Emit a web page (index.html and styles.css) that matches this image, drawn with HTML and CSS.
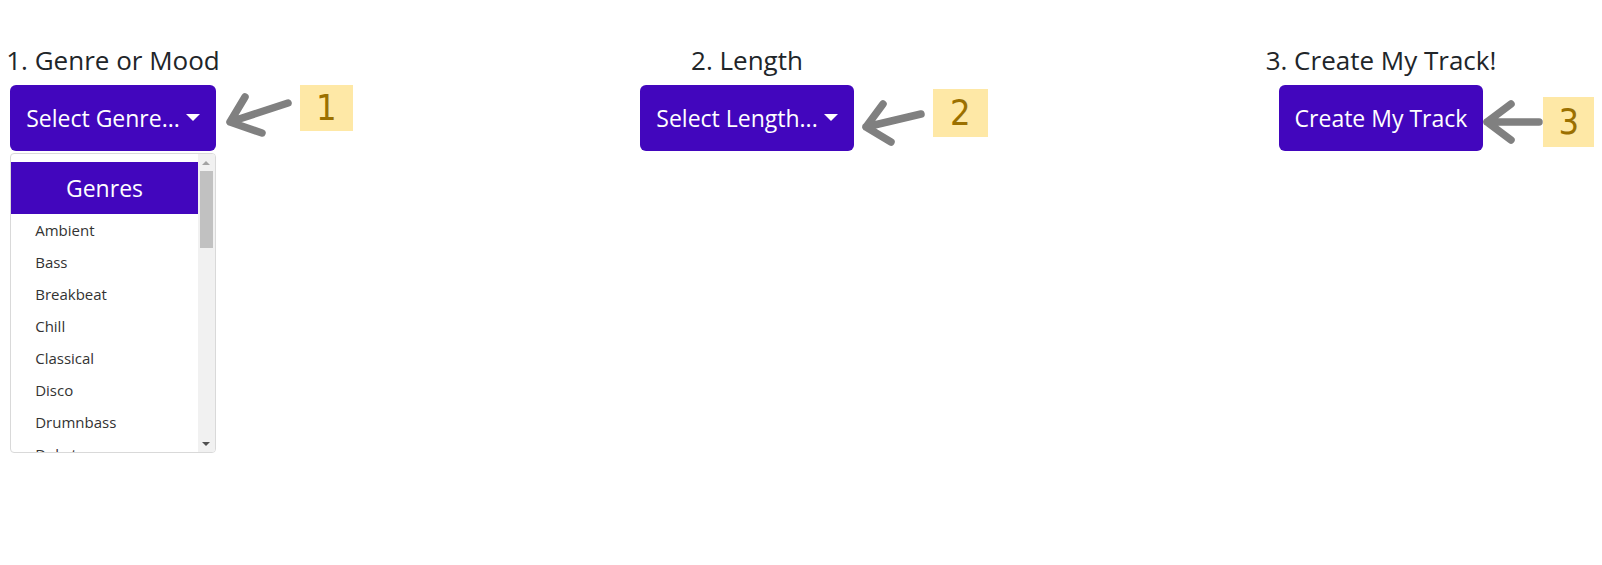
FILE: index.html
```html
<!DOCTYPE html>
<html lang="en">
<head>
<meta charset="utf-8">
<title>Create My Track</title>
<link rel="stylesheet" href="styles.css">
</head>
<body>
<main class="steps">
  <section class="step">
    <h3 class="step-title">1. Genre or Mood</h3>
    <div class="dropdown">
      <div class="btn-wrap">
        <button class="btn btn-toggle" type="button">Select Genre...</button>
        <div class="hint hint-1">
          <svg class="hint-arrow" width="80" height="60" viewBox="0 0 80 60">
            <path d="M72 18 L14 37 M29 12 L14 37 L46 48" />
          </svg>
          <span class="hint-num">1</span>
        </div>
      </div>
      <div class="menu">
        <div class="menu-list">
          <div class="menu-header">Genres</div>
          <div class="menu-item">Ambient</div>
          <div class="menu-item">Bass</div>
          <div class="menu-item">Breakbeat</div>
          <div class="menu-item">Chill</div>
          <div class="menu-item">Classical</div>
          <div class="menu-item">Disco</div>
          <div class="menu-item">Drumnbass</div>
          <div class="menu-item">Dubstep</div>
          <div class="menu-item">Electro</div>
          <div class="menu-item">Funk</div>
          <div class="menu-item">Hiphop</div>
          <div class="menu-item">House</div>
          <div class="menu-item">Indie</div>
          <div class="menu-item">Jazz</div>
          <div class="menu-item">Lofi</div>
          <div class="menu-item">Pop</div>
          <div class="menu-item">Rock</div>
          <div class="menu-item">Synthwave</div>
          <div class="menu-item">Techno</div>
          <div class="menu-item">Trance</div>
          <div class="menu-item">Trap</div>
          <div class="menu-header">Moods</div>
          <div class="menu-item">Calm</div>
          <div class="menu-item">Dark</div>
          <div class="menu-item">Dreamy</div>
          <div class="menu-item">Energetic</div>
          <div class="menu-item">Epic</div>
          <div class="menu-item">Happy</div>
          <div class="menu-item">Romantic</div>
          <div class="menu-item">Sad</div>
          <div class="menu-item">Uplifting</div>
        </div>
        <div class="scrollbar">
          <div class="sb-btn sb-up"></div>
          <div class="sb-track"><div class="sb-thumb"></div></div>
          <div class="sb-btn sb-down"></div>
        </div>
      </div>
    </div>
  </section>

  <section class="step">
    <h3 class="step-title">2. Length</h3>
    <div class="btn-wrap">
      <button class="btn btn-toggle" type="button">Select Length...</button>
      <div class="hint hint-2">
        <svg class="hint-arrow" width="80" height="64" viewBox="0 0 80 64">
          <path d="M67 29 L12 42 M29 19 L12 42 L37 57" />
        </svg>
        <span class="hint-num">2</span>
      </div>
    </div>
  </section>

  <section class="step">
    <h3 class="step-title">3. Create My Track!</h3>
    <div class="btn-wrap">
      <button class="btn" type="button">Create My Track</button>
      <div class="hint hint-3">
        <svg class="hint-arrow" width="62" height="64" viewBox="0 0 62 64">
          <path d="M56 37 L4 37 M28 19 L4 37 L28 55" />
        </svg>
        <span class="hint-num">3</span>
      </div>
    </div>
  </section>
</main>
</body>
</html>
```

FILE: styles.css
```css
* {
  box-sizing: border-box;
}

html,
body {
  min-height: 100%;
}

body {
  margin: 0;
  background: #fff;
  color: #212529;
  font-family: "Open Sans", "Noto Sans", "DejaVu Sans", sans-serif;
}

.steps {
  display: grid;
  grid-template-columns: repeat(3, 226px);
  column-gap: 408px;
  align-items: start;
  padding-top: 43px;
  padding-bottom: 100px;
}

.step {
  display: flex;
  flex-direction: column;
  align-items: center;
}

.step-title {
  margin: 0 0 8px;
  font-size: 26px;
  line-height: 34px;
  font-weight: 400;
  white-space: nowrap;
}

.dropdown {
  display: flex;
  flex-direction: column;
  gap: 2px;
}

.btn-wrap {
  position: relative;
}

.btn {
  display: block;
  width: 100%;
  border: none;
  border-radius: 6px;
  background: #4206bd;
  color: #fff;
  font-family: inherit;
  font-size: 23px;
  line-height: 36px;
  padding: 15px 16px;
  white-space: nowrap;
  cursor: pointer;
}

.btn-toggle::after {
  content: "";
  display: inline-block;
  margin-left: 6px;
  vertical-align: 6px;
  border-top: 7px solid #fff;
  border-left: 7px solid transparent;
  border-right: 7px solid transparent;
}

/* annotations */
.hint {
  position: absolute;
  top: 0;
  left: 100%;
}

.hint-arrow {
  position: absolute;
  top: 0;
  left: 0;
}

.hint-arrow path {
  fill: none;
  stroke: #808080;
  stroke-width: 7.5;
  stroke-linecap: round;
  stroke-linejoin: round;
}

.hint-num {
  position: absolute;
  display: flex;
  align-items: center;
  justify-content: center;
  background: #fee8a6;
  color: #9b7000;
  font-family: "DejaVu Sans Condensed", "DejaVu Sans", sans-serif;
  font-weight: 200;
  font-size: 36px;
  line-height: 1;
}

.hint-1 .hint-num {
  left: 84px;
  top: 0;
  width: 53px;
  height: 46px;
}

.hint-2 .hint-num {
  left: 79px;
  top: 4px;
  width: 55px;
  height: 48px;
}

.hint-3 .hint-num {
  left: 60px;
  top: 12px;
  width: 51px;
  height: 50px;
}

/* dropdown menu */
.menu {
  height: 300px;
  display: flex;
  overflow: hidden;
  background: #fff;
  border: 1px solid #d9d9d9;
  border-radius: 4px;
}

.menu-list {
  flex: 1;
  min-width: 0;
  padding: 8px 0;
  overflow: hidden;
}

.menu-header {
  height: 52px;
  line-height: 52px;
  background: #4206bd;
  color: #fff;
  font-size: 23px;
  text-align: center;
}

.menu-item {
  padding: 4px 24px;
  font-size: 15px;
  line-height: 24px;
  color: #333;
  white-space: nowrap;
}

.scrollbar {
  width: 17px;
  flex: none;
  display: flex;
  flex-direction: column;
  background: #f1f1f1;
}

.sb-btn {
  height: 17px;
  flex: none;
  display: flex;
  align-items: center;
  justify-content: center;
}

.sb-up::before,
.sb-down::before {
  content: "";
  border-left: 4px solid transparent;
  border-right: 4px solid transparent;
}

.sb-up::before {
  border-bottom: 4px solid #a3a3a3;
}

.sb-down::before {
  border-top: 4px solid #505050;
}

.sb-track {
  flex: 1;
  padding: 0 2px;
}

.sb-thumb {
  height: 77px;
  background: #c1c1c1;
}
```
